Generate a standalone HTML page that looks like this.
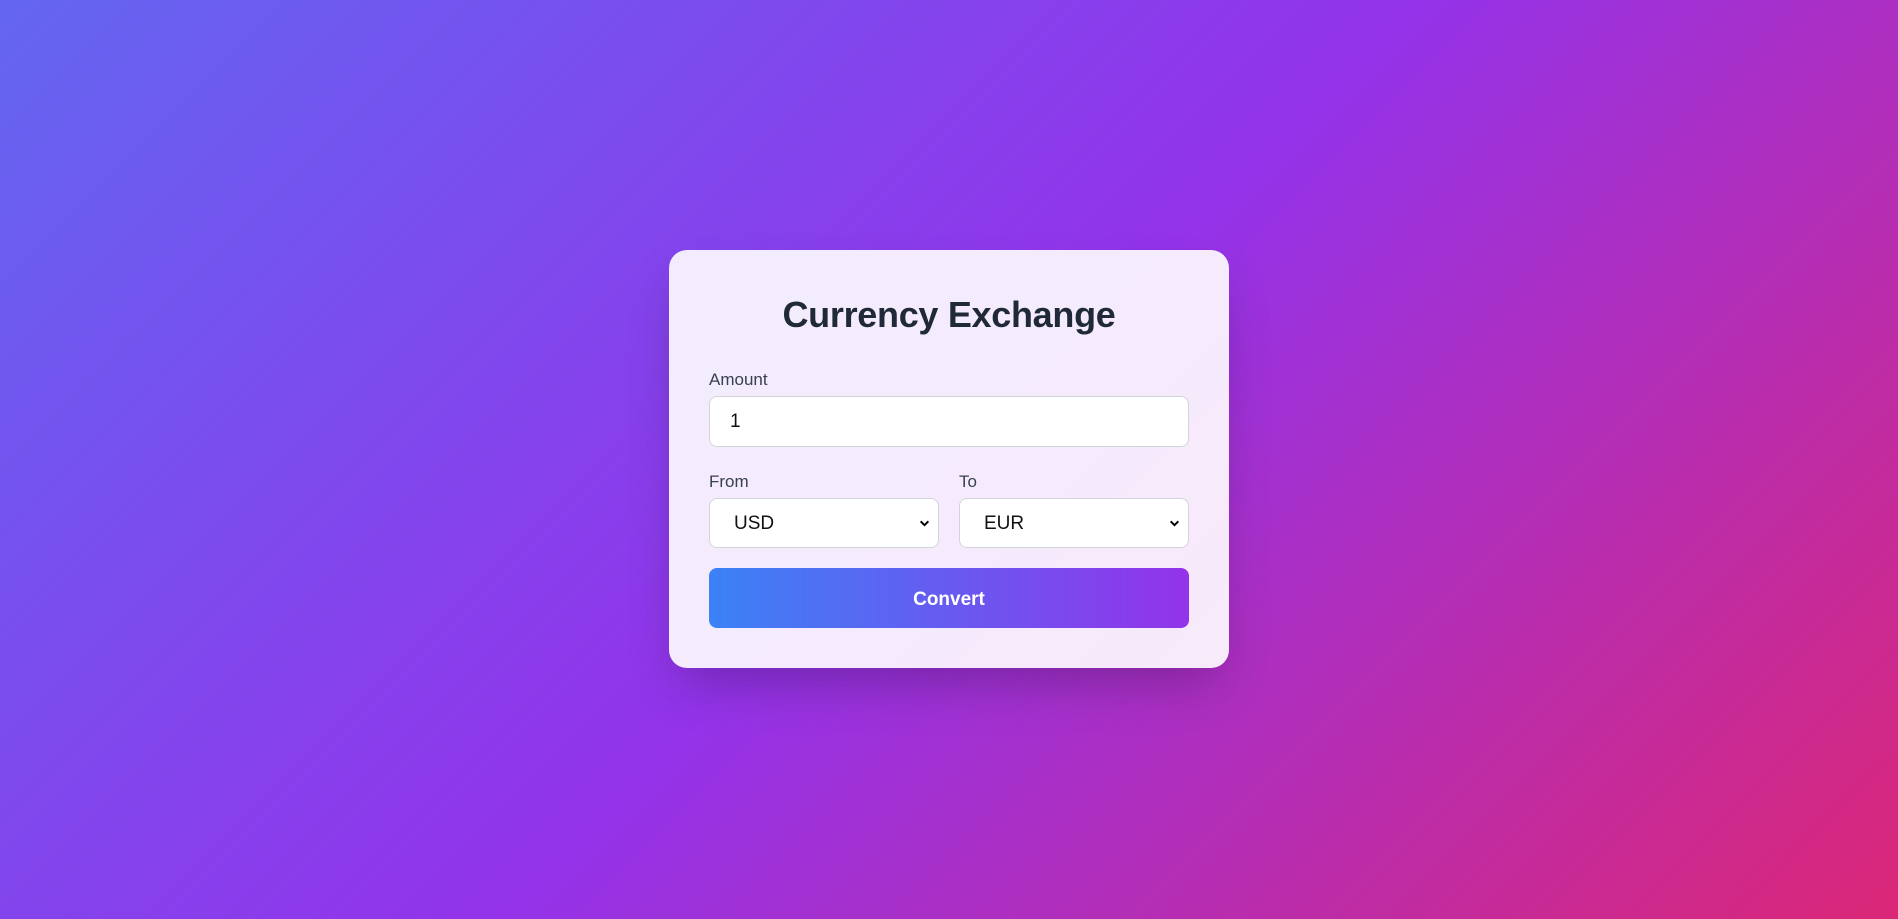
<!DOCTYPE html>
<html><head><style>
*{box-sizing:border-box;margin:0;padding:0}
html,body{width:1898px;height:919px;overflow:hidden}
body{background:linear-gradient(135deg,#6366f1 0%,#9333ea 50%,#db2777 100%);font-family:"Liberation Sans",sans-serif;position:relative}
.card{position:absolute;left:669px;top:250px;width:560px;height:418px;background:rgba(255,255,255,0.9);border-radius:18px;box-shadow:0 25px 50px -12px rgba(0,0,0,0.25)}
h1{position:absolute;left:0;right:0;top:43px;text-align:center;font-size:36px;font-weight:bold;color:#1f2937;line-height:44px;letter-spacing:-0.3px}
.lbl{position:absolute;font-size:17px;color:#374151;line-height:20px}
.box{position:absolute;background:#fff;border:1px solid #d1d5db;border-radius:8px;font-size:19px;color:#111;line-height:50px}
.chev{position:absolute;right:8px;top:19px;width:11px;height:11px}
.btn{position:absolute;left:40px;top:318px;width:480px;height:60px;border-radius:8px;background:linear-gradient(90deg,#3b82f6,#9333ea);color:#fff;font-weight:bold;font-size:19px;text-align:center;line-height:63px}
</style></head><body>
<div class="card">
<h1>Currency Exchange</h1>
<div class="lbl" style="left:40px;top:120px">Amount</div>
<div class="box" style="left:40px;top:146px;width:480px;height:51px;padding-left:20px">1</div>
<div class="lbl" style="left:40px;top:222px">From</div>
<div class="lbl" style="left:290px;top:222px">To</div>
<div class="box" style="left:40px;top:248px;width:230px;height:50px;padding-left:24px">USD<svg class="chev" viewBox="0 0 10 10"><path d="M1.5 3l3.5 3.5 3.5-3.5" stroke="#000" stroke-width="1.8" fill="none"/></svg></div>
<div class="box" style="left:290px;top:248px;width:230px;height:50px;padding-left:24px">EUR<svg class="chev" viewBox="0 0 10 10"><path d="M1.5 3l3.5 3.5 3.5-3.5" stroke="#000" stroke-width="1.8" fill="none"/></svg></div>
<div class="btn">Convert</div>
</div>
</body></html>
